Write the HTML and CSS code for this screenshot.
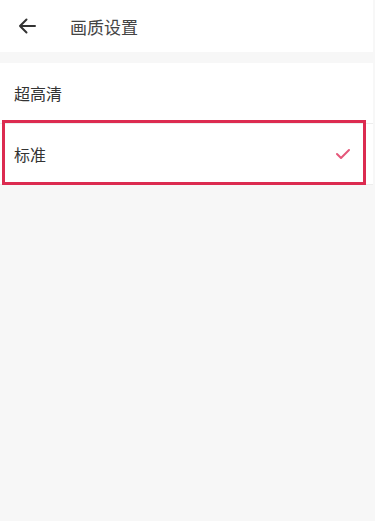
FILE: index.html
```html
<!DOCTYPE html>
<html lang="zh">
<head>
  <meta charset="UTF-8">
  <title>画质设置</title>
  <link rel="stylesheet" href="styles.css">
</head>
<body>

<div class="kopf">
  <svg class="zurueck" width="20" height="20" viewBox="0 0 20 20">
    <path d="M18 10H3M9.5 3.5L3 10l6.5 6.5" fill="none" stroke="#333" stroke-width="2" stroke-linecap="round" stroke-linejoin="round"/>
  </svg>
  <span class="titel">画质设置</span>
</div>

<div class="trenner"></div>

<div class="liste">
  <div class="zeile">超高清</div>
  <div class="zeile aktiv">
    <span>标准</span>
    <svg width="16" height="12" viewBox="0 0 16 12">
      <path d="M2 6l4 4 8-8" fill="none" stroke="#e5577a" stroke-width="2" stroke-linecap="round" stroke-linejoin="round"/>
    </svg>
  </div>
</div>

</body>
</html>
```

FILE: styles.css
```css
html, body {
  margin: 0;
  height: 100%;
  background: #f7f7f7;
  font-family: "Noto Sans CJK SC", "Noto Sans", sans-serif;
  color: #333;
}

.kopf {
  height: 52px;
  background: #fff;
  display: flex;
  align-items: center;
  width: 373px;
}

.zurueck {
  margin-left: 17px;
  margin-right: 33px;
}

.titel {
  font-size: 17px;
  color: #444;
}

.trenner {
  height: 11px;
  width: 373px;
}

.liste {
  background: #fff;
  width: 373px;
}

.zeile {
  height: 60px;
  padding: 0 14px;
  display: flex;
  align-items: center;
  justify-content: space-between;
  font-size: 16px;
  border-bottom: 1px solid #ededed;
  position: relative;
}

/* rote Markierung */
.aktiv::after {
  content: "";
  position: absolute;
  left: 2px;
  top: -4px;
  width: 358px;
  height: 59px;
  border: 3px solid #dc2b50;
}

.aktiv svg {
  margin-right: 8px;
}
```
